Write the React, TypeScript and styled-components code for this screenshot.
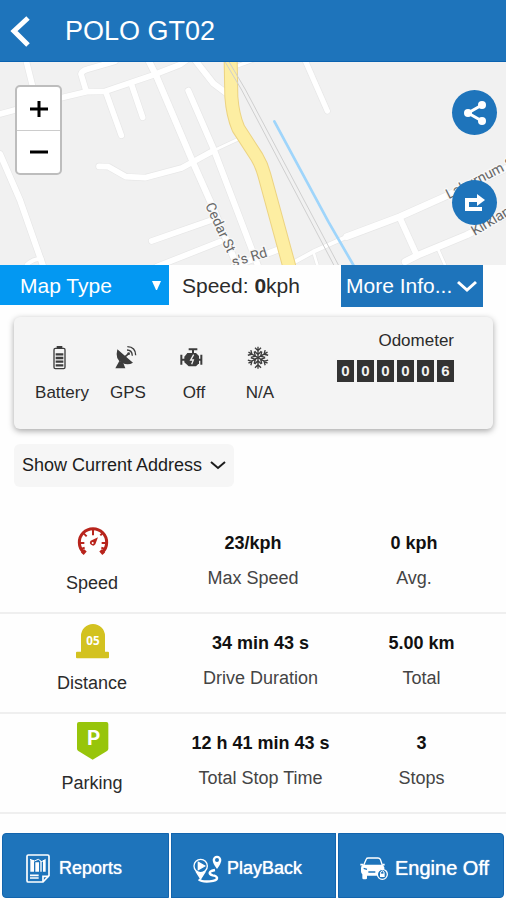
import React from "react";
import styled, { createGlobalStyle } from "styled-components";

const Global = createGlobalStyle`
  *, *::before, *::after { box-sizing: border-box; }
  body {
    margin: 0;
    background: #fefefe;
    color: #2b2b2b;
    font-family: "Liberation Sans", Arial, sans-serif;
  }
  button { font-family: inherit; cursor: pointer; }
  svg { display: block; flex: none; }
`;

const blue = "#1e74bb";

const Page = styled.main`
  min-height: 100vh;
  display: flex;
  flex-direction: column;
`;

const Header = styled.header`
  height: 62px;
  display: flex;
  align-items: center;
  gap: 34px;
  padding: 0 10px;
  background: ${blue};
  border-bottom: 1px solid #0a62b0;
`;

const BackButton = styled.button`
  padding: 0;
  border: 0;
  background: none;
  color: #fff;
`;

const Title = styled.h1`
  margin: 0;
  font-size: 27px;
  font-weight: 400;
  line-height: 32px;
  color: #fff;
`;

const MapArea = styled.section`
  position: relative;
  height: 203px;
  background: #f1f1f1;
  overflow: hidden;
`;

const MapDrawing = styled.svg`
  width: 100%;
  height: 100%;
`;

const ZoomControl = styled.div`
  position: absolute;
  top: 23px;
  left: 15px;
  display: flex;
  flex-direction: column;
  width: 47px;
  border: 2px solid #bdbdbd;
  border-radius: 5px;
  background: #fff;
`;

const ZoomButton = styled.button`
  height: 43px;
  display: flex;
  align-items: center;
  justify-content: center;
  padding: 0;
  border: 0;
  background: none;
  color: #000;
  & + & { border-top: 1px solid #ccc; }
`;

const MapActions = styled.div`
  position: absolute;
  top: 28px;
  right: 9px;
  display: flex;
  flex-direction: column;
  gap: 45px;
`;

const RoundButton = styled.button`
  width: 45px;
  height: 45px;
  display: flex;
  align-items: center;
  justify-content: center;
  padding: 0;
  border: 0;
  border-radius: 50%;
  background: ${blue};
  color: #fff;
`;

const ControlBar = styled.div`
  display: grid;
  grid-template-columns: 169fr 172fr 142fr 23fr;
  align-items: start;
`;

const SelectWrap = styled.div`
  display: grid;
  align-items: center;
  background: #0398f2;
  color: #fff;
  & > * { grid-area: 1 / 1; }
  & > svg { justify-self: end; margin-right: 8px; pointer-events: none; }
`;

const MapSelect = styled.select`
  width: 100%;
  height: 40px;
  padding: 0 24px 0 20px;
  border: 0;
  appearance: none;
  background: none;
  color: #fff;
  font-family: inherit;
  font-size: 21px;
`;

const SpeedReadout = styled.p`
  margin: 0;
  padding-left: 13px;
  font-size: 21px;
  line-height: 42px;
  white-space: nowrap;
`;

const MoreButton = styled.button`
  height: 42px;
  display: flex;
  align-items: center;
  gap: 5px;
  padding: 0 5px;
  border: 0;
  background: ${blue};
  color: #fff;
  font-size: 21px;
  white-space: nowrap;
`;

const StatusCard = styled.section`
  height: 112px;
  margin: 10px 13px 0 14px;
  display: flex;
  justify-content: space-between;
  border-radius: 6px;
  background: #f4f4f4;
  box-shadow: 0 2px 6px rgba(0, 0, 0, 0.35);
`;

const StatusList = styled.ul`
  margin: 0;
  padding: 29px 0 0 15px;
  display: flex;
  list-style: none;
`;

const StatusItem = styled.li`
  width: 66px;
  display: flex;
  flex-direction: column;
  align-items: center;
  gap: 13px;
  font-size: 17px;
  line-height: 20px;
  & > svg { margin-right: 4px; color: #3c3c3c; }
`;

const Odometer = styled.div`
  padding: 14px 39px 0 0;
  display: flex;
  flex-direction: column;
  align-items: flex-end;
  gap: 9px;
  font-size: 17px;
  line-height: 20px;
`;

const Digits = styled.div`
  display: flex;
  gap: 3px;
`;

const Digit = styled.span`
  width: 17px;
  height: 22px;
  background: #333;
  color: #f2f2f2;
  font-size: 15px;
  font-weight: 700;
  line-height: 22px;
  text-align: center;
`;

const AddressButton = styled.button`
  align-self: flex-start;
  height: 43px;
  margin: 15px 0 0 14px;
  padding: 0 8px;
  display: flex;
  align-items: center;
  gap: 8px;
  border: 0;
  border-radius: 6px;
  background: #f6f6f6;
  color: #1c1c1c;
  font-size: 18px;
`;

const Stats = styled.section`
  margin-top: 27px;
`;

const StatRow = styled.div<{ $columns: string }>`
  height: 100px;
  display: grid;
  grid-template-columns: ${(p) => p.$columns};
  border-bottom: 2px solid #efefef;
  font-size: 18px;
  line-height: 24px;
  text-align: center;
`;

const StatHeading = styled.div`
  display: flex;
  flex-direction: column;
  align-items: center;
  gap: 10px;
  padding-top: 7px;
`;

const StatCell = styled.div`
  display: flex;
  flex-direction: column;
  gap: 11px;
  padding-top: 17px;
`;

const Value = styled.strong`
  color: #111;
`;

const Caption = styled.span`
  color: #444;
`;

const Footer = styled.nav`
  margin-top: auto;
  display: grid;
  grid-template-columns: 167fr 165fr 166fr;
  gap: 2px;
  padding: 0 2px 2px;
`;

const FooterButton = styled.button<{ $gap: number; $size: number }>`
  height: 65px;
  display: flex;
  align-items: center;
  gap: ${(p) => p.$gap}px;
  padding: 6px 0 0 21px;
  border: 1px solid #1264ad;
  background: ${blue};
  color: #fff;
  font-size: ${(p) => p.$size}px;
  text-shadow: 0 0 1px #fff;
  white-space: nowrap;
  &:first-child { padding-left: 23px; border-radius: 4px 0 0 4px; }
  &:last-child { border-radius: 0 4px 4px 0; }
`;

const roads: [string, number][] = [
  ["M0 162 L45 150 L190 112 L260 95 L315 94 L460 45 L540 14 L560 0", 17],
  ["M78 0 L98 80", 17],
  ["M258 92 L243 42 Q246 32 262 28 L345 4", 17],
  ["M445 0 L470 50 L580 310 L640 445 L712 620", 19],
  ["M318 98 L364 226", 17],
  ["M395 75 L428 172", 17],
  ["M565 92 L640 265 L775 620", 18],
  ["M585 0 L640 70 L680 100", 18],
  ["M297 319 L325 320 L378 350 L435 353 L545 324 L640 272", 17],
  ["M640 272 L720 235", 8],
  ["M455 543 L630 482", 17],
  ["M470 620 L660 545", 17],
  ["M0 282 L60 420 L130 620", 18],
  ["M80 615 Q98 596 125 596", 12],
  ["M915 0 L982 153", 16],
  ["M1518 325 L1330 412 L1200 470 L1040 530", 20],
  ["M1045 528 L940 575 L885 605", 12],
  ["M1200 475 L1250 585", 18],
  ["M1215 605 L1255 585 L1400 525 L1518 465", 20],
  ["M1315 570 L1335 615", 8],
  ["M940 575 L952 615", 8],
  ["M700 620 L850 563", 18],
  ["M700 22 L760 0", 10],
];

function StreetMap() {
  return (
    <MapDrawing viewBox="0 6 1518 609" preserveAspectRatio="xMidYMid slice" role="img" aria-label="Street map">
      <rect x="-2000" y="0" width="6000" height="700" fill="#f1f1f1" />
      <g fill="none" strokeLinecap="round" strokeLinejoin="round">
        {roads.map(([d, w]) => <path key={d} d={d} stroke="#e7e7e7" strokeWidth={w + 4} />)}
        {roads.map(([d, w]) => <path key={d} d={d} stroke="#fff" strokeWidth={w} />)}
        <path d="M692 0 L694 110 Q698 165 715 205 L770 290 Q785 315 793 345 L868 620" stroke="#ecd382" strokeWidth="42" />
        <path d="M692 0 L694 110 Q698 165 715 205 L770 290 Q785 315 793 345 L868 620" stroke="#fdeea2" strokeWidth="36" />
        <path d="M672 0 L725 90 L1004 620 M684 0 L737 90 L1018 620" stroke="#cfcfcf" strokeWidth="3" />
        <path d="M823 184 L985 485 L1060 615" stroke="#9fd5fb" strokeWidth="8" />
      </g>
      <g fontFamily="Roboto, sans-serif" fontSize="42" fill="#676767" stroke="#f8f8f8" strokeWidth="8" paintOrder="stroke">
        <text transform="translate(615 436) rotate(65)">Cedar St</text>
        <text transform="translate(700 621) rotate(-17)">s's Rd</text>
        <text transform="translate(1346 418) rotate(-27)">Laburnum S</text>
        <text transform="translate(1424 528) rotate(-31)">Kirkland</text>
      </g>
    </MapDrawing>
  );
}

function Chevron({ w, h, stroke }: { w: number; h: number; stroke: number }) {
  return (
    <svg width={w} height={h} viewBox={`0 0 ${w} ${h}`} fill="none" stroke="currentColor" strokeWidth={stroke} aria-hidden="true">
      <path d={`M1 2 L${w / 2} ${h - 3} L${w - 1} 2`} />
    </svg>
  );
}

function StatusIcon({ x, children }: { x: number; children: React.ReactNode }) {
  return (
    <svg width="24" height="24" viewBox={`${x} 108 72 72`} fill="none" stroke="currentColor" strokeWidth="5" aria-hidden="true">
      {children}
    </svg>
  );
}

const BatteryIcon = () => (
  <StatusIcon x={144}>
    <rect x="162" y="115" width="33" height="61" rx="4" strokeWidth="4" />
    <path d="M170 111 H187" strokeWidth="6" />
    <path d="M167 133 H190 M167 144 H190 M167 155 H190 M167 166 H190" strokeWidth="7" />
  </StatusIcon>
);

const DishIcon = () => (
  <StatusIcon x={342}>
    <path d="M352 118 Q344 150 367 159 Q384 167 399 158 Z" fill="currentColor" stroke="none" />
    <path d="M358 153 L346 175 H376 L369 157 Z" fill="currentColor" stroke="none" />
    <path d="M372 143 L386 131" />
    <circle cx="386" cy="131" r="4" fill="currentColor" stroke="none" />
    <path d="M381 120 Q396 120 397 137 M382 110 Q407 111 407 136" strokeWidth="4" />
  </StatusIcon>
);

const EngineIcon = () => (
  <StatusIcon x={540}>
    <path d="M566 118 H592 M579 118 V130 M544 134 V164 M544 149 H556 M604 134 V164 M604 149 H592" strokeWidth="6" />
    <path d="M562 129 H588 L597 138 V160 L588 169 H566 L553 157 V140 Z" fill="currentColor" stroke="none" />
    <path d="M581 134 L572 150 H580 L575 163" stroke="#eee" strokeWidth="4" />
  </StatusIcon>
);

const SnowIcon = () => (
  <StatusIcon x={738}>
    {[0, 60, 120, 180, 240, 300].map((a) => (
      <path key={a} transform={`rotate(${a} 774 143)`} d="M774 143 V110 M765 113 L774 122 L783 113 M764 124 L774 134 L784 124" strokeWidth="4" />
    ))}
  </StatusIcon>
);

const GaugeIcon = () => (
  <svg width="40" height="40" viewBox="216 33 120 120" fill="none" stroke="#b8241c" aria-hidden="true">
    <path d="M247 131 L256 121 M311 131 L302 121" strokeWidth="11" />
    <path d="M251 127 A41 41 0 1 1 307 127" strokeWidth="9" />
    <path d="M279 60 V76 M239 99 H253 M319 99 H305 M251 70 L260 79 M307 70 L301 76 M244 117 L254 113 M314 117 L304 113" strokeWidth="6" />
    <path d="M294 82 L286 103 A8 8 0 1 1 272 92 Z" fill="#b8241c" stroke="none" />
    <circle cx="278" cy="99" r="3" fill="#fff" stroke="none" />
  </svg>
);

const MilestoneIcon = () => (
  <svg width="40" height="40" viewBox="216 33 120 120" aria-hidden="true">
    <path d="M243 125 V78 A36 36 0 0 1 315 78 V125 H324 Q327 125 327 128 V142 Q327 145 324 145 H231 Q228 145 228 142 V128 Q228 125 231 125 Z" fill="#d3c220" />
    <text x="279" y="104" textAnchor="middle" fontFamily="Open Sans, sans-serif" fontWeight="700" fontSize="35" fill="#fff">05</text>
  </svg>
);

const ParkingIcon = () => (
  <svg width="40" height="40" viewBox="216 33 120 120" aria-hidden="true">
    <path d="M237 36 H319 Q325 36 325 42 V116 Q325 120 321 123 L278 149 L235 123 Q231 120 231 116 V42 Q231 36 237 36 Z" fill="#97c50b" />
    <text x="281" y="106" textAnchor="middle" fontFamily="Roboto, sans-serif" fontWeight="700" fontSize="62" fill="#fff">P</text>
  </svg>
);

const ReportIcon = () => (
  <svg width="24" height="29" viewBox="79 85 72 87" fill="none" stroke="#fff" strokeWidth="5" aria-hidden="true">
    <path d="M86 88 H144 Q148 88 148 92 V150 L130 169 H86 Q82 169 82 165 V92 Q82 88 86 88 Z" />
    <path d="M130 168 V152 H147" />
    <path d="M92 103 H103 V138 H92 Z M107 110 H118 V138 H107 Z M122 106 H126 V138 H122 Z M130 103 H138 V138 H130 Z" fill="#fff" stroke="none" />
    <path d="M91 101 L104 106 L116 101 L126 108 L138 101" strokeWidth="3" />
    <path d="M91 149 H117 M91 157 H117" strokeWidth="5" />
  </svg>
);

const PlaybackIcon = () => (
  <svg width="29" height="28" viewBox="578 88 87 84" fill="none" stroke="#fff" strokeWidth="4" aria-hidden="true">
    <circle cx="601" cy="121" r="20" />
    <path d="M587 137 L601 159 L615 137 Q601 147 587 137 Z" fill="#fff" />
    <path d="M594 110 L613 121 L594 132 Z" fill="#fff" />
    <path d="M595 161 Q604 169 628 167 Q652 165 650 156 Q648 150 637 149 Q624 145 630 138 Q634 135 644 133" strokeWidth="7" />
    <path d="M650 130 Q637 113 637 103 A13 13 0 0 1 663 103 Q663 113 650 130 Z" fill="#fff" stroke="none" />
    <circle cx="650" cy="103" r="6" fill={blue} stroke="none" />
  </svg>
);

const CarLockIcon = () => (
  <svg width="28" height="23" viewBox="322 94 84 69" fill="none" stroke="#fff" strokeWidth="4" aria-hidden="true">
    <path d="M333 119 L341 100 Q342 97 347 97 H376 Q381 97 383 101 L389 119" />
    <path d="M323 117 H331 M390 117 H396" strokeWidth="5" />
    <path d="M331 117 H391 L396 128 L372 150 H343 V158 Q343 161 339 161 H333 Q329 161 329 157 V146 Q325 143 325 137 V127 Q325 119 331 117 Z" fill="#fff" stroke="none" />
    <path d="M333 128 L343 131 M347 139 H368" stroke={blue} />
    <circle cx="389" cy="146" r="15" fill={blue} stroke="#fff" />
    <path d="M382 144 H396 V154 H382 Z" fill="#fff" stroke="none" />
    <path d="M384 145 V139 Q389 132 394 139 V145" strokeWidth="3" />
  </svg>
);

const twoColumns = "184fr 153fr 169fr";

const stats = [
  { label: "Speed", icon: <GaugeIcon />, columns: "184fr 138fr 184fr", cells: [["23/kph", "Max Speed"], ["0 kph", "Avg."]] },
  { label: "Distance", icon: <MilestoneIcon />, columns: twoColumns, cells: [["34 min 43 s", "Drive Duration"], ["5.00 km", "Total"]] },
  { label: "Parking", icon: <ParkingIcon />, columns: twoColumns, cells: [["12 h 41 min 43 s", "Total Stop Time"], ["3", "Stops"]] },
];

export default function App() {
  return (
    <>
      <Global />
      <Page>
        <Header>
          <BackButton aria-label="Back">
            <svg width="21" height="32" viewBox="0 0 21 32" fill="none" stroke="currentColor" strokeWidth="5">
              <path d="M18 3 L4 16 L18 30" />
            </svg>
          </BackButton>
          <Title>POLO GT02</Title>
        </Header>

        <MapArea>
          <StreetMap />
          <ZoomControl>
            <ZoomButton aria-label="Zoom in">
              <svg width="18" height="18" viewBox="0 0 18 18" stroke="currentColor" strokeWidth="3"><path d="M0 9 H18 M9 1 V17" /></svg>
            </ZoomButton>
            <ZoomButton aria-label="Zoom out">
              <svg width="18" height="18" viewBox="0 0 18 18" stroke="currentColor" strokeWidth="3"><path d="M0 9 H18" /></svg>
            </ZoomButton>
          </ZoomControl>
          <MapActions>
            <RoundButton aria-label="Share">
              <svg width="24" height="24" viewBox="0 0 24 24" fill="currentColor" stroke="currentColor" strokeWidth="3">
                <path d="M19 4 L5 12 L19 20" fill="none" />
                <g stroke="none"><circle cx="19" cy="4" r="4" /><circle cx="5" cy="12" r="4" /><circle cx="19" cy="20" r="4" /></g>
              </svg>
            </RoundButton>
            <RoundButton aria-label="Navigate">
              <svg width="20" height="18" viewBox="0 0 20 18" fill="none" stroke="currentColor" strokeWidth="4">
                <path d="M17 15 H2 V6 H14" />
                <path d="M12 0 L20 6 L12 12 Z" fill="currentColor" stroke="none" />
              </svg>
            </RoundButton>
          </MapActions>
        </MapArea>

        <ControlBar>
          <SelectWrap>
            <MapSelect aria-label="Map type" defaultValue="type">
              <option value="type">Map Type</option>
            </MapSelect>
            <svg width="9" height="9" viewBox="0 0 9 9" fill="#fff" aria-hidden="true"><path d="M0 0 H9 L5 9 H4 Z" /></svg>
          </SelectWrap>
          <SpeedReadout>Speed: <b>0</b>kph</SpeedReadout>
          <MoreButton>More Info...<Chevron w={20} h={13} stroke={3} /></MoreButton>
        </ControlBar>

        <StatusCard>
          <StatusList>
            <StatusItem><BatteryIcon />Battery</StatusItem>
            <StatusItem><DishIcon />GPS</StatusItem>
            <StatusItem><EngineIcon />Off</StatusItem>
            <StatusItem><SnowIcon />N/A</StatusItem>
          </StatusList>
          <Odometer>
            <span>Odometer</span>
            <Digits>
              {"000006".split("").map((d, i) => <Digit key={i}>{d}</Digit>)}
            </Digits>
          </Odometer>
        </StatusCard>

        <AddressButton>Show Current Address<Chevron w={16} h={11} stroke={2} /></AddressButton>

        <Stats>
          {stats.map((s) => (
            <StatRow key={s.label} $columns={s.columns}>
              <StatHeading>{s.icon}<span>{s.label}</span></StatHeading>
              {s.cells.map(([value, caption]) => (
                <StatCell key={caption}>
                  <Value>{value}</Value>
                  <Caption>{caption}</Caption>
                </StatCell>
              ))}
            </StatRow>
          ))}
        </Stats>

        <Footer>
          <FooterButton $gap={9} $size={18}><ReportIcon />Reports</FooterButton>
          <FooterButton $gap={5} $size={18}><PlaybackIcon />PlayBack</FooterButton>
          <FooterButton $gap={7} $size={20}><CarLockIcon />Engine Off</FooterButton>
        </Footer>
      </Page>
    </>
  );
}
